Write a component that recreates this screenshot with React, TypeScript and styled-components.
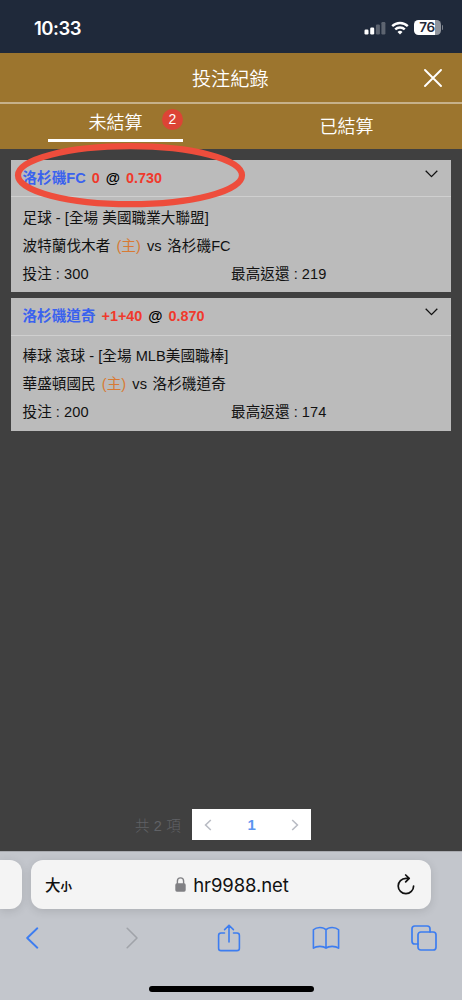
import React from "react";
import styled, { createGlobalStyle } from "styled-components";

const Global = createGlobalStyle`
  * { box-sizing: border-box; }
  body { margin: 0; background: #404040; }
`;

const Screen = styled.div`
  width: 462px;
  height: 1000px;
  display: flex;
  flex-direction: column;
  overflow: hidden;
  background: #404040;
  font-family: "Liberation Sans", "Noto Sans CJK TC", sans-serif;
  white-space: nowrap;
`;

const StatusBar = styled.div`
  height: 53px;
  flex: none;
  display: flex;
  align-items: center;
  justify-content: space-between;
  padding: 2px 19px 0 34px;
  background: #1f293a;
  color: #fff;
`;

const Clock = styled.span`
  font: 600 18.5px/24px Inter, sans-serif;
  letter-spacing: -0.5px;
`;

const StatusIcons = styled.div`
  display: flex;
  align-items: center;
  gap: 5px;
  svg { display: block; }
`;

const Battery = styled.div`
  display: flex;
  align-items: center;
  gap: 1px;
`;

const BatteryBody = styled.div`
  width: 27px;
  height: 15px;
  border-radius: 4.5px;
  background: linear-gradient(90deg, #fff 76%, #8f949c 76%);
  color: #1f293a;
  font: 600 13.5px/15.5px Inter, sans-serif;
  letter-spacing: -0.3px;
  text-align: center;
`;

const BatteryTip = styled.div`
  width: 1.5px;
  height: 5px;
  border-radius: 0 2px 2px 0;
  background: #7b818b;
`;

const TitleBar = styled.header`
  height: 49px;
  flex: none;
  display: grid;
  grid-template-columns: 60px 1fr 60px;
  align-items: center;
  background: #9c752e;
`;

const Title = styled.h1`
  grid-column: 2;
  margin: 0;
  padding: 4px 1.5px 0 0;
  text-align: center;
  color: #fff;
  font-size: 19.2px;
  line-height: 26px;
  font-weight: 350;
`;

const CloseButton = styled.div`
  display: flex;
  padding-left: 22px;
`;

const Tabs = styled.nav`
  height: 46.5px;
  flex: none;
  display: grid;
  grid-template-columns: 1fr 1fr;
  border-top: 2px solid #c6b18a;
  background: #9c752e;
  color: #fff;
  font-size: 18px;
  font-weight: 350;
  line-height: 26px;
`;

const Tab = styled.div<{ $active?: boolean }>`
  position: relative;
  width: 135px;
  height: 38px;
  justify-self: center;
  padding-top: ${(p) => (p.$active ? 6 : 10)}px;
  text-align: center;
  border-bottom: 3px solid ${(p) => (p.$active ? "#fff" : "transparent")};
`;

const Count = styled.span`
  position: absolute;
  right: 0;
  top: 5px;
  width: 21px;
  height: 21px;
  border-radius: 50%;
  background: #dc4435;
  font: 14px/21px "Liberation Sans", sans-serif;
`;

const Body = styled.main`
  flex: 1;
  display: flex;
  flex-direction: column;
  gap: 6px;
  padding: 11px 11px 0;
`;

const Card = styled.section`
  height: 132.5px;
  background: #bbb;
  color: #111;
  font-size: 14.6px;
`;

const CardHead = styled.div`
  position: relative;
  height: 37.5px;
  display: flex;
  align-items: center;
  justify-content: space-between;
  padding: 0 13px 0 11.5px;
  border-bottom: 1.5px solid #cfcfcf;
  font-weight: 700;
  line-height: 20px;
  svg { display: block; margin-top: -8px; }
`;

const Pick = styled.div`
  display: flex;
  gap: 6px;
  color: #000;
`;

const Team = styled.span`
  color: #3a62ee;
`;

const Odds = styled.span`
  color: #f0392c;
  font-size: 14.4px;
`;

const Lines = styled.div`
  padding: 6.5px 11.5px 0;
`;

const Line = styled.div`
  height: 28px;
  line-height: 28px;
  letter-spacing: 0.04px;
`;

const SplitLine = styled(Line)`
  display: grid;
  grid-template-columns: 208.5px 1fr;
`;

const Home = styled.span`
  color: #d87a34;
  margin: 0 2px;
`;

const Away = styled.span`
  margin-left: 1.5px;
`;

const Ring = styled.svg`
  position: absolute;
  left: 2px;
  top: -20px;
  width: 236px;
  height: 70px;
  && { margin: 0; }
`;

const Pager = styled.div`
  display: flex;
  align-items: center;
  justify-content: center;
  gap: 11px;
  margin: auto 0 11px;
  padding-right: 16px;
`;

const Total = styled.span`
  color: #606266;
  font-size: 14.5px;
  font-weight: 300;
  letter-spacing: 0.2px;
`;

const Pages = styled.div`
  width: 119px;
  height: 31px;
  display: flex;
  align-items: center;
  justify-content: space-between;
  padding: 0 12px;
  background: #fff;
  color: #5b95f0;
  font: 700 15px "Liberation Sans", sans-serif;
`;

const Browser = styled.footer`
  height: 149px;
  flex: none;
  display: flex;
  flex-direction: column;
  background: #c3c6cc;
  border-top: 1px solid #a9abb0;
`;

const AddressRow = styled.div`
  display: flex;
  gap: 9px;
  padding-top: 8px;
`;

const PrevTab = styled.div`
  width: 22px;
  height: 49px;
  border-radius: 0 12px 12px 0;
  background: #f4f4f4;
  box-shadow: 0 2px 10px rgba(0, 0, 0, 0.12);
`;

const Address = styled.div`
  width: 400px;
  height: 49px;
  display: grid;
  grid-template-columns: 100px 1fr 100px;
  align-items: center;
  padding: 0 16px 0 14px;
  border-radius: 12px;
  background: #f4f4f4;
  box-shadow: 0 2px 10px rgba(0, 0, 0, 0.12);
  color: #111;
`;

const TextSize = styled.span`
  display: flex;
  align-items: baseline;
  padding-top: 1px;
  font: 500 15.5px/20px "Noto Sans CJK TC", sans-serif;
  small { font-size: 11.5px; font-weight: 700; }
`;

const Url = styled.span`
  display: flex;
  align-items: center;
  justify-content: center;
  gap: 7px;
  padding-left: 4px;
  font: 400 18.5px/24px Inter, sans-serif;
  letter-spacing: -0.1px;
`;

const Reload = styled.span`
  display: flex;
  justify-content: flex-end;
`;

const Toolbar = styled.div`
  height: 56px;
  display: grid;
  grid-template-columns: 64px 136px 57px 138px 58px;
  justify-items: center;
  align-items: center;
  padding-top: 1px;
  color: #3d7df0;
  svg { display: block; }
`;

const HomeBar = styled.div`
  width: 165px;
  height: 6px;
  margin: 20.5px 0 0 148.5px;
  border-radius: 3px;
  background: #000;
`;

interface Bet {
  team: string;
  handicap: string;
  odds: string;
  league: string;
  home: string;
  away: string;
  stake: string;
  payout: string;
  circled?: boolean;
}

const bets: Bet[] = [
  { team: "洛杉磯FC", handicap: "0", odds: "0.730", league: "足球 - [全場 美國職業大聯盟]", home: "波特蘭伐木者", away: "洛杉磯FC", stake: "300", payout: "219", circled: true },
  { team: "洛杉磯道奇", handicap: "+1+40", odds: "0.870", league: "棒球 滾球 - [全場 MLB美國職棒]", home: "華盛頓國民", away: "洛杉磯道奇", stake: "200", payout: "174" },
];

const stroke = { fill: "none", stroke: "currentColor", strokeLinecap: "round", strokeLinejoin: "round" } as const;

function BetCard({ bet }: { bet: Bet }) {
  return (
    <Card>
      <CardHead>
        <Pick>
          <Team>{bet.team}</Team>
          <Odds>{bet.handicap}</Odds>
          <span>@</span>
          <Odds>{bet.odds}</Odds>
        </Pick>
        <svg width="13" height="8" viewBox="0 0 13 8" {...stroke} strokeLinecap="butt" strokeWidth="1.3">
          <path d="M.7.8 6.5 6.6 12.3.8" />
        </svg>
        {bet.circled && (
          <Ring viewBox="0 0 236 70">
            <ellipse cx="117" cy="35.2" rx="112" ry="29" fill="none" stroke="#ee4d3c" strokeWidth="6.2" />
          </Ring>
        )}
      </CardHead>
      <Lines>
        <Line>{bet.league}</Line>
        <Line>
          {bet.home} <Home>(主)</Home> vs <Away>{bet.away}</Away>
        </Line>
        <SplitLine>
          <span>投注 : {bet.stake}</span>
          <span>最高返還 : {bet.payout}</span>
        </SplitLine>
      </Lines>
    </Card>
  );
}

export default function App() {
  return (
    <Screen>
      <Global />
      <StatusBar>
        <Clock>10:33</Clock>
        <StatusIcons>
          <svg width="22" height="14" viewBox="0 0 22 14" fill="#fff">
            <rect x="0.5" y="8.5" width="4" height="5" rx="1.2" />
            <rect x="6.2" y="6.5" width="4" height="7" rx="1.2" />
            <rect x="11.9" y="3.5" width="4" height="10" rx="1.2" opacity=".28" />
            <rect x="17.4" y="1" width="4" height="12.5" rx="1.2" opacity=".28" />
          </svg>
          <svg width="18" height="14" viewBox="0 0 18 14" fill="none" stroke="#fff" strokeWidth="2.4">
            <path d="M1.2 5.2a11.2 11.2 0 0 1 15.6 0M4.2 8.4a6.9 6.9 0 0 1 9.6 0" />
            <path d="M9 13.6 6.5 11a3.6 3.6 0 0 1 5 0z" fill="#fff" stroke="none" />
          </svg>
          <Battery>
            <BatteryBody>76</BatteryBody>
            <BatteryTip />
          </Battery>
        </StatusIcons>
      </StatusBar>
      <TitleBar>
        <Title>投注紀錄</Title>
        <CloseButton>
          <svg width="18" height="18" viewBox="0 0 18 18" stroke="#fff" strokeWidth="1.9" strokeLinecap="round">
            <path d="m1 1 16 16M17 1 1 17" />
          </svg>
        </CloseButton>
      </TitleBar>
      <Tabs>
        <Tab $active>
          未結算<Count>2</Count>
        </Tab>
        <Tab>已結算</Tab>
      </Tabs>
      <Body>
        {bets.map((bet) => (
          <BetCard key={bet.team} bet={bet} />
        ))}
        <Pager>
          <Total>共 2 項</Total>
          <Pages>
            <svg width="8" height="12" viewBox="0 0 8 12" fill="none" stroke="#b9bcc4" strokeWidth="1.6">
              <path d="M6.8 1 1.6 6l5.2 5" />
            </svg>
            <span>1</span>
            <svg width="8" height="12" viewBox="0 0 8 12" fill="none" stroke="#b9bcc4" strokeWidth="1.6">
              <path d="m1.2 1 5.2 5-5.2 5" />
            </svg>
          </Pages>
        </Pager>
      </Body>
      <Browser>
        <AddressRow>
          <PrevTab />
          <Address>
            <TextSize>
              大<small>小</small>
            </TextSize>
            <Url>
              <svg width="11" height="15" viewBox="0 0 11 15">
                <rect x="0.3" y="6.3" width="10.4" height="8.4" rx="1.6" fill="#808084" />
                <path d="M2.4 7V4a3.1 3.1 0 0 1 6.2 0v3" fill="none" stroke="#808084" strokeWidth="1.4" />
              </svg>
              hr9988.net
            </Url>
            <Reload>
              <svg width="18" height="21" viewBox="0 0 18 21" {...stroke} strokeWidth="1.7">
                <path d="M16.6 12a7.7 7.7 0 1 1-7.7-7.7h3.2M8.7 1l3.5 3.3-3.5 3.6" />
              </svg>
            </Reload>
          </Address>
        </AddressRow>
        <Toolbar>
          <svg width="14" height="22" viewBox="0 0 14 22" {...stroke} strokeWidth="1.9">
            <path d="M12.3 1.3 2.2 11l10.1 9.7" />
          </svg>
          <svg width="14" height="22" viewBox="0 0 14 22" {...stroke} stroke="#a0a3a9" strokeWidth="1.6">
            <path d="m2.2 1.3 9.8 9.7-9.8 9.7" />
          </svg>
          <svg width="24" height="28" viewBox="0 0 24 28" {...stroke} strokeWidth="1.6">
            <path d="M7.5 9H4a2.4 2.4 0 0 0-2.4 2.4v12.8A2.4 2.4 0 0 0 4 26.6h16a2.4 2.4 0 0 0 2.4-2.4V11.4A2.4 2.4 0 0 0 20 9h-3.5M12 18V1.4M7.6 5.6 12 1.2l4.4 4.4" />
          </svg>
          <svg width="28" height="24" viewBox="0 0 28 24" {...stroke} strokeWidth="1.6">
            <path d="M14 3.8C11.5.7 4.5.7 1.4 3.8v18.4C4.5 19.8 11.5 19.8 14 22.2c2.5-2.4 9.5-2.4 12.6 0V3.8C23.5.7 16.5.7 14 3.8zv18.4" />
          </svg>
          <svg width="26" height="26" viewBox="0 0 26 26" {...stroke} strokeWidth="1.7">
            <rect x="7" y="7" width="18" height="18" rx="2.8" />
            <path d="M7 19H3.8A2.8 2.8 0 0 1 1 16.2V3.8A2.8 2.8 0 0 1 3.8 1h12.4A2.8 2.8 0 0 1 19 3.8V7" />
          </svg>
        </Toolbar>
        <HomeBar />
      </Browser>
    </Screen>
  );
}
